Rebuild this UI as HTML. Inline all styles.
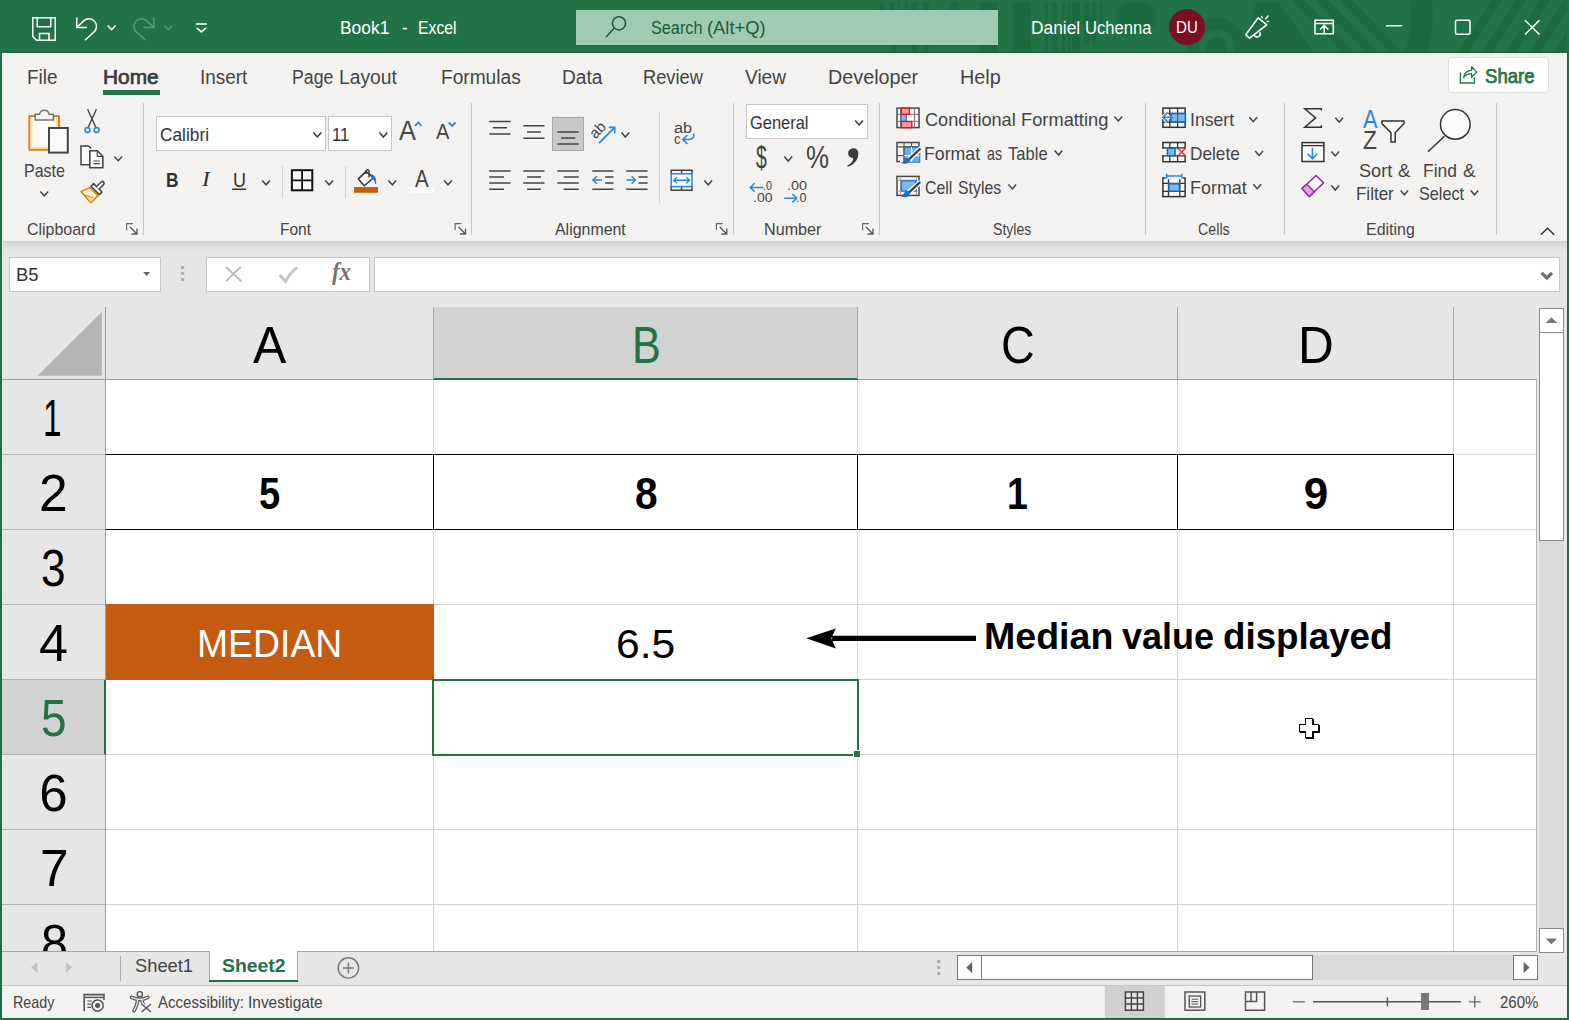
<!DOCTYPE html>
<html lang="en"><head><meta charset="utf-8"><title>Book1 - Excel</title>
<style>
html,body{margin:0;padding:0;}
body{width:1569px;height:1020px;overflow:hidden;position:relative;background:#e6e6e6;font-family:"Liberation Sans", sans-serif;}
#app{position:absolute;left:0;top:0;width:1569px;height:1020px;overflow:hidden;}
#app div{position:absolute;box-sizing:border-box;}
.t{position:absolute;white-space:nowrap;transform-origin:0 0;display:block;}
svg.ov{position:absolute;left:0;top:0;}
</style></head><body><div id="app">
<div style="left:0px;top:0px;width:1569px;height:1020px;background:#217346;"></div>
<div style="left:2px;top:53px;width:1565px;height:965px;background:#e6e6e6;"></div>
<div style="left:1px;top:52px;width:1567px;height:967px;background:#186a3b;"></div>
<div style="left:2px;top:53px;width:1565px;height:965px;background:#fbf9f9;"></div>
<div style="left:3px;top:54px;width:1564px;height:964px;background:#e6e6e6;"></div>
<div style="left:576px;top:10px;width:422px;height:35px;background:#9fcbb2;"></div>
<div style="left:3px;top:54px;width:1564px;height:187px;background:#f3f2f1;"></div>
<div style="left:3px;top:241px;width:1564px;height:10px;background:linear-gradient(#d0d0d0,#dcdcdc 40%,#e6e6e6);"></div>
<div style="left:103px;top:90px;width:57px;height:5px;background:#217346;"></div>
<div style="left:1448px;top:57px;width:101px;height:36px;background:#fff;border:1px solid #e1dfdd;border-radius:4px;"></div>
<div style="left:143px;top:103px;width:1px;height:132px;background:#c8c6c4;"></div>
<div style="left:471px;top:103px;width:1px;height:132px;background:#c8c6c4;"></div>
<div style="left:733px;top:103px;width:1px;height:132px;background:#c8c6c4;"></div>
<div style="left:879px;top:103px;width:1px;height:132px;background:#c8c6c4;"></div>
<div style="left:1145px;top:103px;width:1px;height:132px;background:#c8c6c4;"></div>
<div style="left:1284px;top:103px;width:1px;height:132px;background:#c8c6c4;"></div>
<div style="left:1496px;top:103px;width:1px;height:132px;background:#c8c6c4;"></div>
<div style="left:282px;top:166px;width:1px;height:32px;background:#d2d0ce;"></div>
<div style="left:345px;top:166px;width:1px;height:32px;background:#d2d0ce;"></div>
<div style="left:659px;top:112px;width:1px;height:91px;background:#d2d0ce;"></div>
<div style="left:156px;top:116px;width:170px;height:35px;background:#fff;border:1px solid #c8c6c4;"></div>
<div style="left:328px;top:116px;width:64px;height:35px;background:#fff;border:1px solid #c8c6c4;"></div>
<div style="left:746px;top:104px;width:122px;height:35px;background:#fff;border:1px solid #c8c6c4;"></div>
<div style="left:552px;top:117px;width:32px;height:34px;background:#c8c8c8;border:1px solid #a6a6a6;"></div>
<div style="left:9px;top:257px;width:152px;height:35px;background:#fff;border:1px solid #c6c6c6;"></div>
<div style="left:206px;top:257px;width:164px;height:35px;background:#fff;border:1px solid #c6c6c6;"></div>
<div style="left:374px;top:257px;width:1186px;height:35px;background:#fff;border:1px solid #c6c6c6;"></div>
<div style="left:106px;top:380px;width:1430px;height:571px;background:#fff;"></div>
<div style="left:434px;top:307px;width:423px;height:71px;background:#d2d2d2;"></div>
<div style="left:433px;top:378px;width:425px;height:2px;background:#217346;"></div>
<div style="left:2px;top:680px;width:102px;height:74px;background:#d2d2d2;"></div>
<div style="left:104px;top:679px;width:2px;height:76px;background:#217346;"></div>
<div style="left:2px;top:379px;width:432px;height:1px;background:#9b9b9b;"></div>
<div style="left:858px;top:379px;width:679px;height:1px;background:#9b9b9b;"></div>
<div style="left:105px;top:307px;width:1px;height:373px;background:#9b9b9b;"></div>
<div style="left:105px;top:755px;width:1px;height:197px;background:#9b9b9b;"></div>
<div style="left:433px;top:307px;width:1px;height:72px;background:#a6a6a6;"></div>
<div style="left:857px;top:307px;width:1px;height:72px;background:#a6a6a6;"></div>
<div style="left:1177px;top:307px;width:1px;height:72px;background:#a6a6a6;"></div>
<div style="left:1453px;top:307px;width:1px;height:72px;background:#a6a6a6;"></div>
<div style="left:2px;top:454px;width:103px;height:1px;background:#b0b0b0;"></div>
<div style="left:2px;top:529px;width:103px;height:1px;background:#b0b0b0;"></div>
<div style="left:2px;top:604px;width:103px;height:1px;background:#b0b0b0;"></div>
<div style="left:2px;top:679px;width:103px;height:1px;background:#b0b0b0;"></div>
<div style="left:2px;top:754px;width:103px;height:1px;background:#b0b0b0;"></div>
<div style="left:2px;top:829px;width:103px;height:1px;background:#b0b0b0;"></div>
<div style="left:2px;top:904px;width:103px;height:1px;background:#b0b0b0;"></div>
<div style="left:433px;top:380px;width:1px;height:571px;background:#d4d4d4;"></div>
<div style="left:857px;top:380px;width:1px;height:571px;background:#d4d4d4;"></div>
<div style="left:1177px;top:380px;width:1px;height:571px;background:#d4d4d4;"></div>
<div style="left:1453px;top:380px;width:1px;height:571px;background:#d4d4d4;"></div>
<div style="left:106px;top:454px;width:1430px;height:1px;background:#d4d4d4;"></div>
<div style="left:106px;top:529px;width:1430px;height:1px;background:#d4d4d4;"></div>
<div style="left:106px;top:604px;width:1430px;height:1px;background:#d4d4d4;"></div>
<div style="left:106px;top:679px;width:1430px;height:1px;background:#d4d4d4;"></div>
<div style="left:106px;top:754px;width:1430px;height:1px;background:#d4d4d4;"></div>
<div style="left:106px;top:829px;width:1430px;height:1px;background:#d4d4d4;"></div>
<div style="left:106px;top:904px;width:1430px;height:1px;background:#d4d4d4;"></div>
<div style="left:1536px;top:379px;width:1px;height:573px;background:#b4b4b4;"></div>
<div style="left:106px;top:604px;width:328px;height:76px;background:#c55a11;"></div>
<div style="left:106px;top:454px;width:1348px;height:1px;background:#000;"></div>
<div style="left:106px;top:529px;width:1348px;height:1px;background:#000;"></div>
<div style="left:433px;top:454px;width:1px;height:76px;background:#000;"></div>
<div style="left:857px;top:454px;width:1px;height:76px;background:#000;"></div>
<div style="left:1177px;top:454px;width:1px;height:76px;background:#000;"></div>
<div style="left:1453px;top:454px;width:1px;height:76px;background:#000;"></div>
<div style="left:432px;top:679px;width:427px;height:77px;border:2px solid #217346;"></div>
<div style="left:853px;top:750px;width:7px;height:7px;background:#fff;"></div>
<div style="left:854px;top:751px;width:6px;height:6px;background:#217346;"></div>
<div style="left:1539px;top:541px;width:25px;height:388px;background:#d9d9d9;"></div>
<div style="left:1539px;top:308px;width:25px;height:25px;background:#fff;border:1px solid #8a8a8a;"></div>
<div style="left:1539px;top:332px;width:25px;height:209px;background:#fff;border:1px solid #8a8a8a;"></div>
<div style="left:2px;top:951px;width:1565px;height:35px;background:#e6e6e6;"></div>
<div style="left:2px;top:951px;width:1535px;height:1px;background:#a6a6a6;"></div>
<div style="left:1539px;top:928px;width:25px;height:25px;background:#fff;border:1px solid #8a8a8a;"></div>
<div style="left:2px;top:985px;width:1565px;height:1px;background:#c6c6c6;"></div>
<div style="left:120px;top:956px;width:1px;height:25px;background:#ababab;"></div>
<div style="left:209px;top:951px;width:89px;height:29px;background:#fff;border-left:1px solid #a6a6a6;border-right:1px solid #a6a6a6;"></div>
<div style="left:209px;top:980px;width:89px;height:2px;background:#217346;"></div>
<div style="left:1313px;top:955px;width:201px;height:25px;background:#d9d9d9;"></div>
<div style="left:957px;top:955px;width:25px;height:25px;background:#fff;border:1px solid #777;"></div>
<div style="left:981px;top:955px;width:332px;height:25px;background:#fff;border:1px solid #777;"></div>
<div style="left:1513px;top:955px;width:25px;height:25px;background:#fff;border:1px solid #777;"></div>
<div style="left:2px;top:986px;width:1565px;height:32px;background:#f3f2f1;"></div>
<div style="left:1105px;top:986px;width:60px;height:32px;background:#d2d0ce;"></div>
<svg class="ov" width="1569" height="1020" viewBox="0 0 1569 1020" fill="none">
<svg x="0" y="0" width="1567" height="52" viewBox="0 0 1567 52" overflow="hidden"><g fill="#1e6a40"><rect x="879.5" y="2" width="4.5" height="8"/><rect x="890" y="2" width="4.4" height="8"/><rect x="898" y="2" width="2" height="8"/><rect x="904.7" y="2" width="3.3" height="8"/><rect x="911.6" y="2" width="5.8" height="8"/><rect x="923" y="2" width="6" height="8"/><rect x="949.5" y="2" width="9.2" height="8"/><rect x="979.3" y="2" width="18.4" height="8"/><rect x="891" y="45" width="5.7" height="7"/><rect x="911.6" y="45" width="5.8" height="7"/><rect x="924" y="45" width="5" height="7"/><rect x="979" y="45" width="18.7" height="7"/><rect x="1012.6" y="2" width="18.4" height="50"/><rect x="1044.7" y="2" width="3.3" height="50"/><rect x="1051.6" y="2" width="5.4" height="50"/><rect x="1062" y="2" width="3" height="50"/><rect x="1067.7" y="2" width="2.3" height="50"/><rect x="1072" y="2" width="8" height="50"/><rect x="1083.7" y="2" width="5.8" height="43"/><rect x="1091.8" y="2" width="4.2" height="43"/><rect x="1099.8" y="2" width="3.2" height="23"/><rect x="1115" y="2" width="42" height="29" rx="14"/><path d="M1244 54L1256 2H1278L1316 54Z"/><circle cx="1216.5" cy="47" r="10.5"/></g><circle cx="1216.5" cy="47" r="23.6" stroke="#1e6a40" stroke-width="11.8"/><g stroke="#1e6a40" stroke-width="9"><path d="M1296 -2L1352 56"/><path d="M1320 -2L1376 56"/><path d="M1344 -2L1400 56"/><path d="M1461 56L1498 -2"/><path d="M1485 56L1522 -2"/><path d="M1509 56L1546 -2"/><path d="M1533 56L1570 -2"/><path d="M1557 56L1594 -2"/></g><path d="M1418 -8A88 88 0 0 1 1410 62" stroke="#1e6a40" stroke-width="22"/></svg>
<circle cx="1187" cy="27.1" r="18" fill="#7a0f22"/>
<path d="M32.75 17.75H55.25V40.25H36.5L32.75 36.5Z M37.25 17.75V26.75H50.75V17.75 M39.5 40.25V33.5H49V40.25" stroke="#fff" stroke-width="1.5"/>
<path d="M76.75 17.5V27.5H87 M77.2 27L84 20.6A7.6 7.6 0 0 1 94.8 31.2L85 40.3" stroke="#fff" stroke-width="1.5"/>
<path d="M107.70 25.50L111.60 29.70L115.50 25.50" stroke="#fff" stroke-width="1.5"/>
<g transform="translate(230.5 0) scale(-1 1)"><path d="M76.75 17.5V27.5H87 M77.2 27L84 20.6A7.6 7.6 0 0 1 94.8 31.2L85 40.3" stroke="#5b9a78" stroke-width="1.5"/></g>
<path d="M164.40 25.50L168.30 29.70L172.20 25.50" stroke="#5b9a78" stroke-width="1.5"/>
<path d="M195.9 24H207" stroke="#fff" stroke-width="1.5"/>
<path d="M196.60 27.70L201.40 31.90L206.20 27.70" stroke="#fff" stroke-width="1.5"/>
<circle cx="619" cy="23.3" r="6.6" stroke="#1d5c3a" stroke-width="1.5"/><path d="M614.3 28.1L605.8 37.2" stroke="#1d5c3a" stroke-width="1.5"/>
<path d="M1258.2 17.8L1266.8 24.9L1249.5 38.2L1245.8 34.7Z" stroke="#fff" stroke-width="1.5" stroke-linejoin="round"/><path d="M1254 35.2A3 3 0 0 0 1259.8 32.2" stroke="#fff" stroke-width="1.5"/><path d="M1261.3 15.9L1262.6 18.2M1265.3 19.3L1268.6 15.5M1266.6 22L1269.2 21" stroke="#fff" stroke-width="1.3"/>
<path d="M1315 20.2H1333.3V33.7H1315Z M1315 23.6H1333.3 M1324.2 33.5V25.6 M1320 29.5L1324.2 25.3L1328.4 29.5" stroke="#fff" stroke-width="1.5"/>
<path d="M1386 25.75H1402.3" stroke="#fff" stroke-width="1.5"/>
<rect x="1455.5" y="20.2" width="14.5" height="14" rx="1.5" stroke="#fff" stroke-width="1.5"/>
<path d="M1525 20.2L1539.5 34.5M1539.5 20.2L1525 34.5" stroke="#fff" stroke-width="1.5"/>
<rect x="29.4" y="116.1" width="29.5" height="33.6" fill="#fafafa" stroke="#e07b10" stroke-width="2"/><path d="M31.5 118V147.7H47 M56.8 118V126" stroke="#fbe0a0" stroke-width="1.8"/><path d="M35.2 120V114.2H39.6A4.8 4.8 0 0 1 49 114.2H53.4V120Z" fill="#f3f2f1" stroke="#767676" stroke-width="1.5"/><rect x="49" y="128" width="18.8" height="24.6" fill="#fafafa" stroke="#444" stroke-width="2"/>
<path d="M40.40 191.60L44.30 195.80L48.20 191.60" stroke="#444" stroke-width="1.5"/>
<path d="M87.6 109.3L95.8 127.2M96.4 109.3L88.2 127.2" stroke="#444" stroke-width="1.4"/><circle cx="87.5" cy="130" r="2.4" stroke="#2b88d8" stroke-width="1.6"/><circle cx="96.6" cy="130" r="2.4" stroke="#2b88d8" stroke-width="1.6"/>
<path d="M89 164.8H81V146H88.5L91 148.5" stroke="#444" stroke-width="1.5" fill="#fafafa"/><path d="M89.8 150.8H97.3L102.8 156.3V167.7H89.8Z" fill="#fafafa" stroke="#444" stroke-width="1.6"/><path d="M97.3 150.8V156.3H102.8 M93.4 161H99.8M93.4 163.7H99.8" stroke="#444" stroke-width="1.2"/>
<path d="M114.30 156.50L118.20 160.70L122.10 156.50" stroke="#444" stroke-width="1.5"/>
<path d="M81 191.6L90 187.6L98 195.6L90.8 202.8Z" fill="#fdf1d8" stroke="#e07b10" stroke-width="1.5" stroke-linejoin="round"/><path d="M84 195L95 198.5" stroke="#e07b10" stroke-width="1.3"/><path d="M86 196.5L90.8 202L94.5 198.3Z" fill="#fbd58a"/><path d="M91 186.2L93.6 183.6L102 192L99.4 194.6Z" fill="#fafafa" stroke="#444" stroke-width="1.5" stroke-linejoin="round"/><path d="M96.2 186.8L101.2 182A1.6 1.6 0 0 1 103.6 184.4L98.8 189.4" stroke="#444" stroke-width="1.5" fill="#fafafa"/>
<path d="M126.6 230V223.6H133" stroke="#666" stroke-width="1.2"/><path d="M130 227L136.5 233.5M131.5 234H137V228.5" stroke="#555" stroke-width="1.3"/>
<path d="M313.30 132.60L317.30 137.00L321.30 132.60" stroke="#333" stroke-width="1.5"/>
<path d="M379.50 132.60L383.40 137.00L387.30 132.60" stroke="#333" stroke-width="1.5"/>
<path d="M415 126L418.3 122.4L421.6 126" stroke="#2b88d8" stroke-width="1.8"/>
<path d="M448.6 122.3L452.1 125.9L455.6 122.3" stroke="#2b88d8" stroke-width="1.8"/>
<path d="M232.1 189.25H246.2" stroke="#333" stroke-width="1.5"/>
<path d="M262.20 180.40L266.10 184.80L270.00 180.40" stroke="#444" stroke-width="1.5"/>
<rect x="291.9" y="170.2" width="20.4" height="20.1" fill="#fafafa" stroke="#111" stroke-width="2"/><path d="M302.1 170.2V190.3M291.9 180.3H312.3" stroke="#111" stroke-width="1.8"/>
<path d="M325.20 180.40L329.10 184.80L333.00 180.40" stroke="#444" stroke-width="1.5"/>
<rect x="354.1" y="187.1" width="24" height="5.7" fill="#c55a11"/>
<path d="M358.3 178.9L366 171.6L373.6 177.8L364.3 185.7Z" fill="#fafafa" stroke="#333" stroke-width="1.5" stroke-linejoin="round"/><path d="M366 174V170.8A1.6 1.6 0 0 1 369 170.8V177.5" stroke="#333" stroke-width="1.4"/><path d="M371.2 174.6C375 175.5 376.2 179 375.6 183.8C374.8 180.5 373.6 178.6 371.5 177.6Z" fill="#1b6ec2" stroke="#1b6ec2" stroke-width="0.8"/>
<path d="M388.40 180.40L392.30 184.80L396.20 180.40" stroke="#444" stroke-width="1.5"/>
<rect x="409.8" y="187.1" width="24.2" height="5.7" fill="#fff"/>
<path d="M444.10 180.40L448.00 184.80L451.90 180.40" stroke="#444" stroke-width="1.5"/>
<path d="M455.1 230V223.6H461.5" stroke="#666" stroke-width="1.2"/><path d="M458.5 227L465.0 233.5M460.0 234H465.5V228.5" stroke="#555" stroke-width="1.3"/>
<path d="M489.2 121.5H510.6M492.7 127.8H507.1M489.2 134.0H510.6" stroke="#444" stroke-width="1.5"/>
<path d="M523.3 125.8H544.5M527.0 132.1H541.0M523.3 138.2H544.5" stroke="#444" stroke-width="1.5"/>
<path d="M557.3 132.1H578.8M561.0 138.1H575.3M557.3 144.1H578.8" stroke="#444" stroke-width="1.5"/>
<path d="M489.2 170.9H510.6M489.2 177.0H503.9M489.2 183.1H510.6M489.2 189.2H503.9" stroke="#444" stroke-width="1.5"/>
<path d="M523.3 170.9H544.5M527.0 177.0H541.0M523.3 183.1H544.5M527.0 189.2H541.0" stroke="#444" stroke-width="1.5"/>
<path d="M557.3 170.9H578.8M563.7 177.0H578.8M557.3 183.1H578.8M563.7 189.2H578.8" stroke="#444" stroke-width="1.5"/>
<path d="M592.3 170.9H613.5M605.1 177.0H613.5M605.1 183.1H613.5M592.3 189.2H613.5" stroke="#444" stroke-width="1.5"/>
<path d="M626.3 170.9H647.6M638.5 177.0H647.6M638.5 183.1H647.6M626.3 189.2H647.6" stroke="#444" stroke-width="1.5"/>
<path d="M602 180H593.2M596.8 176.2L593 180L596.8 183.8" stroke="#2b88d8" stroke-width="1.5"/>
<path d="M626.5 180H635.2M631.6 176.2L635.4 180L631.6 183.8" stroke="#2b88d8" stroke-width="1.5"/>
<path d="M599 143.2L614.2 127.8M608.8 127.3H614.7V133.2" stroke="#2b88d8" stroke-width="1.7"/>
<text x="0" y="0" transform="translate(595.6 139.6) rotate(-47)" font-family="Liberation Sans, sans-serif" font-size="15" fill="#444" textLength="16.6" lengthAdjust="spacingAndGlyphs">ab</text>
<path d="M621.40 132.60L625.30 137.00L629.20 132.60" stroke="#444" stroke-width="1.5"/>
<path d="M693.6 133.4C694.6 137 692.6 139.5 689 139.5H683M687.4 135L682.8 139.5L687.4 144" stroke="#2b88d8" stroke-width="1.7"/>
<path d="M671.2 173.8V170.2H692V173.8M671.2 186.6V190.3H692V186.6M681.6 170.2V173.8M681.6 186.6V190.3" stroke="#444" stroke-width="1.5"/>
<rect x="671.2" y="173.8" width="20.8" height="12.8" fill="#fafafa" stroke="#2b88d8" stroke-width="1.5"/><path d="M674 180.2H689.4M677 177.2L673.8 180.2L677 183.2M686.4 177.2L689.6 180.2L686.4 183.2" stroke="#2b88d8" stroke-width="1.4"/>
<path d="M704.30 180.40L708.20 184.80L712.10 180.40" stroke="#444" stroke-width="1.5"/>
<path d="M716.4 230V223.6H722.8" stroke="#666" stroke-width="1.2"/><path d="M719.8 227L726.3 233.5M721.3 234H726.8V228.5" stroke="#555" stroke-width="1.3"/>
<path d="M855.20 120.50L859.10 124.90L863.00 120.50" stroke="#333" stroke-width="1.5"/>
<path d="M784.20 156.60L788.20 161.10L792.20 156.60" stroke="#444" stroke-width="1.5"/>
<path d="M853 148.2A4.9 4.9 0 0 1 858.3 153.4C858.3 160 853.5 165 847.6 166.8L847.3 165.6C850.8 163.8 853 161.2 853.2 158.2A4.9 4.9 0 0 1 853 148.2Z" fill="#3b3a39"/>
<path d="M763.2 187.4H750.4M754.6 183.2L750.2 187.4L754.6 191.6" stroke="#2b88d8" stroke-width="1.5"/>
<path d="M784.2 198.2H796.6M792.4 194L796.8 198.2L792.4 202.4" stroke="#2b88d8" stroke-width="1.5"/>
<path d="M862.6 230V223.6H869" stroke="#666" stroke-width="1.2"/><path d="M866 227L872.5 233.5M867.5 234H873V228.5" stroke="#555" stroke-width="1.3"/>
<rect x="897" y="108.1" width="22" height="19.5" fill="#fafafa" stroke="#444" stroke-width="1.5"/><path d="M900.6 108V127.6M914.6 108V127.6M897 114.4H919M897 121.4H919" stroke="#777" stroke-width="1"/><rect x="901.1" y="114.6" width="5.2" height="6.6" fill="#7ab9ec" stroke="#1b6ec2" stroke-width="1"/><rect x="901.4" y="108.1" width="8" height="6.2" fill="#ff9aa2" stroke="#e81123" stroke-width="1.4"/><rect x="901.4" y="121.5" width="10.4" height="6.2" fill="#ff9aa2" stroke="#e81123" stroke-width="1.4"/>
<path d="M1114.40 116.40L1118.30 120.90L1122.20 116.40" stroke="#444" stroke-width="1.5"/>
<path d="M919 146V142.5H897V161.5H900" stroke="#444" stroke-width="1.5"/><rect x="904" y="147" width="15.8" height="15.2" fill="#6cb2ea" stroke="#1b78d0" stroke-width="1"/><path d="M904 142.5V161M911.6 142.5V147M897 146.9H919M897 155.6H904" stroke="#555" stroke-width="1.1"/><path d="M911.6 147V162M904 155.6H919.6" stroke="#fafafa" stroke-width="1"/>
<g transform="translate(896.2 142.2)"><path d="M23.6 7.2L12.2 17.6" stroke="#fafafa" stroke-width="5" stroke-linecap="round"/><path d="M23.6 7L12.2 17.6" stroke="#444" stroke-width="2.4" stroke-linecap="round"/><path d="M12.6 15.8C14.6 17 14.4 19.6 12 20.8C9.6 22 6.6 21.6 4.6 20.6C7 20 7.6 18.8 8.4 17.2C9.2 15.6 11 15 12.6 15.8Z" fill="#1b6ec2"/></g>
<path d="M1054.70 150.60L1058.50 155.10L1062.30 150.60" stroke="#444" stroke-width="1.5"/>
<rect x="897" y="176.4" width="22" height="19" fill="#fafafa" stroke="#444" stroke-width="1.5"/><path d="M900.6 176.4V195.4M916.4 176.4V195.4M897 180.2H919M897 191.2H919" stroke="#999" stroke-width="0.9"/><rect x="901.3" y="180.8" width="14.6" height="10.2" fill="#7ab9ec" stroke="#1b6ec2" stroke-width="1.2"/>
<g transform="translate(896 175.6)"><path d="M23.6 7.2L12.2 17.6" stroke="#fafafa" stroke-width="5" stroke-linecap="round"/><path d="M23.6 7L12.2 17.6" stroke="#444" stroke-width="2.4" stroke-linecap="round"/><path d="M12.6 15.8C14.6 17 14.4 19.6 12 20.8C9.6 22 6.6 21.6 4.6 20.6C7 20 7.6 18.8 8.4 17.2C9.2 15.6 11 15 12.6 15.8Z" fill="#1b6ec2"/></g>
<path d="M1008.50 184.40L1012.30 188.90L1016.10 184.40" stroke="#444" stroke-width="1.5"/>
<rect x="1162.9" y="108.1" width="22.2" height="19.2" fill="#fafafa" stroke="#333" stroke-width="1.5"/>
<path d="M1169.8 108.1V127.3M1177.6 108.1V127.3M1162.9 113.4H1185.1000000000001M1162.9 122.1H1185.1000000000001" stroke="#333" stroke-width="1.3"/>
<rect x="1171" y="113.6" width="14.4" height="8.3" fill="#7ab9ec" stroke="#0f6cbd" stroke-width="1.5"/><path d="M1177.6 113.6V121.9" stroke="#0f6cbd" stroke-width="1.2"/><path d="M1170 117.2H1162.8M1167.6 112.6L1162.8 117.2L1167.6 121.8" stroke="#f3f2f1" stroke-width="3.6"/><path d="M1173.4 117.2H1162.8M1167.6 112.6L1162.8 117.2L1167.6 121.8" stroke="#2b88d8" stroke-width="1.6"/>
<path d="M1249.40 117.30L1253.30 121.70L1257.20 117.30" stroke="#444" stroke-width="1.5"/>
<rect x="1162.9" y="142.5" width="22.2" height="19.2" fill="#fafafa" stroke="#333" stroke-width="1.5"/>
<path d="M1169.8 142.5V161.7M1177.6 142.5V161.7M1162.9 148H1185.1000000000001M1162.9 155.8H1185.1000000000001" stroke="#333" stroke-width="1.3"/>
<rect x="1161.5" y="148.8" width="25.5" height="6.2" fill="#f3f2f1"/><rect x="1167.4" y="148.3" width="7.6" height="7.4" fill="#7ab9ec" stroke="#0f6cbd" stroke-width="1.5"/><path d="M1178 148.4L1185.4 155.8M1185.4 148.4L1178 155.8" stroke="#ee3a3a" stroke-width="1.5"/>
<path d="M1255.20 151.00L1259.10 155.40L1263.00 151.00" stroke="#444" stroke-width="1.5"/>
<rect x="1162.9" y="178" width="22.2" height="18.6" fill="#fafafa" stroke="#333" stroke-width="1.5"/>
<path d="M1168.5 178V196.6M1179.8 178V196.6M1162.9 183.4H1185.1000000000001M1162.9 191.4H1185.1000000000001" stroke="#333" stroke-width="1.3"/>
<rect x="1165.5" y="173" width="17.4" height="6.2" fill="#f3f2f1"/><path d="M1166.6 176.1H1181.8M1166.6 173.8V178.6M1181.8 173.8V178.6" stroke="#2b88d8" stroke-width="1.5"/><rect x="1168.9" y="183.8" width="10.6" height="7.4" fill="#7ab9ec" stroke="#0f6cbd" stroke-width="1.5"/>
<path d="M1253.20 184.30L1257.20 188.70L1261.20 184.30" stroke="#444" stroke-width="1.5"/>
<path d="M1321.3 110.6V108.7H1304.8L1315.6 117.9L1304.8 127.2H1321.3V125.3" stroke="#333" stroke-width="1.5"/>
<path d="M1335.30 117.70L1339.20 122.10L1343.10 117.70" stroke="#444" stroke-width="1.5"/>
<rect x="1302" y="142.6" width="21.9" height="18.9" fill="#fafafa" stroke="#333" stroke-width="1.5"/><path d="M1302 145.6H1324" stroke="#333" stroke-width="1.3"/><path d="M1312.4 147.8V158.4M1307.6 153.8L1312.4 158.6L1317.2 153.8" stroke="#2b88d8" stroke-width="1.6"/>
<path d="M1331.40 151.50L1335.30 155.90L1339.20 151.50" stroke="#444" stroke-width="1.5"/>
<path d="M1302 188.6L1316.1 175.5L1323.6 182.9L1309.2 196.6Z" fill="#fafafa" stroke="#9b2fa5" stroke-width="1.5" stroke-linejoin="round"/><path d="M1302 188.6L1306.8 184.2L1314.2 191.8L1309.2 196.6Z" fill="#dca3e2" stroke="#9b2fa5" stroke-width="1.5" stroke-linejoin="round"/>
<path d="M1331.40 185.60L1335.30 190.00L1339.20 185.60" stroke="#444" stroke-width="1.5"/>
<path d="M1381.9 120.9H1404V123.6L1395.2 132.8V142H1391V132.8L1381.9 123.6Z" fill="#fafafa" stroke="#333" stroke-width="1.5" stroke-linejoin="round"/>
<path d="M1400.60 190.40L1404.30 194.80L1408.00 190.40" stroke="#444" stroke-width="1.5"/>
<circle cx="1455.3" cy="124.4" r="14.8" fill="#fafafa" stroke="#333" stroke-width="1.5"/><path d="M1444.4 136.2L1428 151.8" stroke="#333" stroke-width="1.5"/>
<path d="M1470.80 190.40L1474.50 194.80L1478.20 190.40" stroke="#444" stroke-width="1.5"/>
<path d="M1540.8 234.8L1547.5 228.2L1554.2 234.8" stroke="#333" stroke-width="1.5"/>
<path d="M1460.4 72.4V83H1474.4V77.4" stroke="#217346" stroke-width="1.4"/><path d="M1463.6 77.6C1464.4 72.8 1467.6 70.6 1471.6 70.4V66.8L1476.8 72.1L1471.6 77.2V73.6C1468.2 73.6 1465.6 74.6 1463.6 77.6Z" stroke="#217346" stroke-width="1.3" stroke-linejoin="round"/>
<path d="M143.2 272H150.2L146.7 276Z" fill="#666"/>
<path d="M181 266H184.2V269H181ZM181 272H184.2V275H181ZM181 278H184.2V281H181Z" fill="#b0b0b0"/>
<path d="M226 267L241.4 281.4M241 267C236 271 230 277 226 281.4" stroke="#bdbdbd" stroke-width="2"/>
<path d="M279.6 275L285.6 281.6C288 276 292 271 297.2 267.4" stroke="#c6c6c6" stroke-width="3"/>
<path d="M1541.6 272.8L1546.8 278L1552 272.8" stroke="#707070" stroke-width="3.2"/>
<path d="M37.5 375.8H101.8V312Z" fill="#b4b4b4"/>
<path d="M832 638.35H976" stroke="#000" stroke-width="5.1"/><path d="M806.2 638.35L835.8 628.4L831.3 638.35L835.8 648.4Z" fill="#000"/>
<path d="M1306 719H1314V725H1320V733H1314V739H1306V733H1300V725H1306Z" fill="#000"/><path d="M1305 718H1313V724H1319V732H1313V738H1305V732H1299V724H1305Z" fill="#000"/><path d="M1306 719H1312V725H1318V731H1312V737H1306V731H1300V725H1306Z" fill="#fff"/>
<path d="M1545.6 323H1557.2L1551.4 317.2Z" fill="#777"/>
<path d="M1545.6 938.4H1557.2L1551.4 944.2Z" fill="#777"/>
<path d="M972.2 962V973.2L966.2 967.6Z" fill="#666"/>
<path d="M1523.6 962V973.2L1529.6 967.6Z" fill="#666"/>
<path d="M37.4 962V973L31 967.5Z" fill="#c2c2c2"/><path d="M65.8 962V973L72.2 967.5Z" fill="#c2c2c2"/>
<circle cx="348.4" cy="967.9" r="10.2" stroke="#777" stroke-width="1.4"/><path d="M343 968H353.8M348.4 962.6V973.4" stroke="#777" stroke-width="1.5"/>
<path d="M937 960H940.4V963H937ZM937 966H940.4V969H937ZM937 972H940.4V975H937Z" fill="#b0b0b0"/>
<path d="M84.2 1011V994.6H104V1000" stroke="#555" stroke-width="1.6"/><path d="M84.2 997.4H104" stroke="#555" stroke-width="1.4"/><path d="M87.4 1001H92M87.4 1004.2H91M87.4 1007.4H91" stroke="#555" stroke-width="1.2"/><circle cx="97.6" cy="1005.6" r="5.6" fill="#f3f2f1" stroke="#555" stroke-width="1.5"/><circle cx="97.6" cy="1005.6" r="2.5" fill="#555"/>
<circle cx="139.8" cy="994.2" r="2.6" stroke="#555" stroke-width="1.4"/><path d="M131.6 997.4C135 999 137.4 999.4 139.8 999.4C142.2 999.4 144.6 999 147.8 997.4M137.6 999.6C137.6 1004 135.8 1007.6 134 1010.8M142 999.6C142 1002 142.4 1003.4 143.6 1005" stroke="#555" stroke-width="3.6" stroke-linecap="round" stroke-linejoin="round"/><path d="M131.6 997.4C135 999 137.4 999.4 139.8 999.4C142.2 999.4 144.6 999 147.8 997.4M137.6 999.6C137.6 1004 135.8 1007.6 134 1010.8M142 999.6C142 1002 142.4 1003.4 143.6 1005" stroke="#f3f2f1" stroke-width="1.2" stroke-linecap="round" stroke-linejoin="round"/><path d="M141.6 1004L151 1012M151 1004L141.6 1012" stroke="#f3f2f1" stroke-width="3.4"/><path d="M141.6 1004L151 1012M151 1004L141.6 1012" stroke="#555" stroke-width="1.4"/>
<rect x="1125.4" y="992" width="18" height="18.2" stroke="#444" stroke-width="1.5" fill="#e8e6e4"/><path d="M1131.4 992V1010M1137.4 992V1010M1125.4 998H1143.4M1125.4 1004H1143.4" stroke="#444" stroke-width="1.4"/>
<rect x="1185" y="992" width="19.8" height="18.2" stroke="#555" stroke-width="1.5"/><rect x="1189.2" y="996" width="11.4" height="11" stroke="#555" stroke-width="1.3"/><path d="M1191.6 999.2H1198.2M1191.6 1001.6H1198.2M1191.6 1004H1198.2" stroke="#555" stroke-width="1"/>
<path d="M1245.5 992H1264.6V1010.2H1245.5ZM1245.5 1001.4H1256.6V992M1251 992V1001.4" stroke="#555" stroke-width="1.5"/>
<path d="M1293 1001.8H1304.8" stroke="#666" stroke-width="1.3"/><path d="M1313 1001.8H1461" stroke="#555" stroke-width="1.6"/><path d="M1387.4 997.4V1006.2" stroke="#555" stroke-width="1.4"/><rect x="1421" y="993" width="8" height="17" fill="#777"/><path d="M1469 1001.8H1480.6M1474.8 996V1007.6" stroke="#666" stroke-width="1.3"/>
</svg>
<span class="t" style="left:339.55px;top:19.01px;font-size:18.3px;line-height:18.3px;color:#fff;transform:scaleX(0.9523);">Book1</span>
<span class="t" style="left:401.50px;top:19.01px;font-size:18.3px;line-height:18.3px;color:#fff;transform:scaleX(0.9167);">-</span>
<span class="t" style="left:418.14px;top:19.01px;font-size:18.3px;line-height:18.3px;color:#fff;transform:scaleX(0.8618);">Excel</span>
<span class="t" style="left:650.70px;top:19.01px;font-size:18.3px;line-height:18.3px;color:#1d5c3a;transform:scaleX(0.8880);">Search</span>
<span class="t" style="left:706.59px;top:19.01px;font-size:18.3px;line-height:18.3px;color:#1d5c3a;transform:scaleX(1.0050);">(Alt+Q)</span>
<span class="t" style="left:1031.15px;top:19.01px;font-size:18.3px;line-height:18.3px;color:#fff;transform:scaleX(0.9485);">Daniel</span>
<span class="t" style="left:1085.09px;top:19.01px;font-size:18.3px;line-height:18.3px;color:#fff;transform:scaleX(0.9067);">Uchenna</span>
<span class="t" style="left:1176.16px;top:20.06px;font-size:16px;line-height:16px;color:#fff;transform:scaleX(0.9418);">DU</span>
<span class="t" style="left:26.55px;top:66.82px;font-size:20px;line-height:20px;color:#444;transform:scaleX(0.9484);">File</span>
<span class="t" style="left:102.96px;top:66.82px;font-size:20px;line-height:20px;color:#3a3a3a;transform:scaleX(1.0435);-webkit-text-stroke:0.7px #3a3a3a;">Home</span>
<span class="t" style="left:199.80px;top:66.82px;font-size:20px;line-height:20px;color:#444;transform:scaleX(0.9452);">Insert</span>
<span class="t" style="left:292.12px;top:66.82px;font-size:20px;line-height:20px;color:#444;transform:scaleX(0.8840);">Page</span>
<span class="t" style="left:339.04px;top:66.82px;font-size:20px;line-height:20px;color:#444;transform:scaleX(0.9632);">Layout</span>
<span class="t" style="left:441.04px;top:66.82px;font-size:20px;line-height:20px;color:#444;transform:scaleX(0.9563);">Formulas</span>
<span class="t" style="left:562.04px;top:66.82px;font-size:20px;line-height:20px;color:#444;transform:scaleX(0.9567);">Data</span>
<span class="t" style="left:643.09px;top:66.82px;font-size:20px;line-height:20px;color:#444;transform:scaleX(0.9135);">Review</span>
<span class="t" style="left:745.25px;top:66.82px;font-size:20px;line-height:20px;color:#444;transform:scaleX(0.9542);">View</span>
<span class="t" style="left:828.01px;top:66.82px;font-size:20px;line-height:20px;color:#444;transform:scaleX(0.9889);">Developer</span>
<span class="t" style="left:960.01px;top:66.82px;font-size:20px;line-height:20px;color:#444;transform:scaleX(0.9898);">Help</span>
<span class="t" style="left:1484.75px;top:65.55px;font-size:20.5px;line-height:20.5px;color:#217346;transform:scaleX(0.9070);-webkit-text-stroke:0.75px #217346;">Share</span>
<span class="t" style="left:24.12px;top:161.89px;font-size:18.2px;line-height:18.2px;color:#444;transform:scaleX(0.8812);">Paste</span>
<span class="t" style="left:26.50px;top:221.40px;font-size:16.3px;line-height:16.3px;color:#444;transform:scaleX(0.9798);">Clipboard</span>
<span class="t" style="left:279.55px;top:221.40px;font-size:16.3px;line-height:16.3px;color:#444;transform:scaleX(0.9515);">Font</span>
<span class="t" style="left:554.50px;top:221.40px;font-size:16.3px;line-height:16.3px;color:#444;transform:scaleX(0.9777);">Alignment</span>
<span class="t" style="left:764.01px;top:221.40px;font-size:16.3px;line-height:16.3px;color:#444;transform:scaleX(0.9916);">Number</span>
<span class="t" style="left:992.75px;top:221.40px;font-size:16.3px;line-height:16.3px;color:#444;transform:scaleX(0.8655);">Styles</span>
<span class="t" style="left:1198.20px;top:221.40px;font-size:16.3px;line-height:16.3px;color:#444;transform:scaleX(0.8752);">Cells</span>
<span class="t" style="left:1365.77px;top:221.40px;font-size:16.3px;line-height:16.3px;color:#444;transform:scaleX(0.9795);">Editing</span>
<span class="t" style="left:159.50px;top:126.14px;font-size:18.2px;line-height:18.2px;color:#333;transform:scaleX(0.9504);">Calibri</span>
<span class="t" style="left:331.59px;top:126.14px;font-size:18.2px;line-height:18.2px;color:#333;transform:scaleX(0.9148);">11</span>
<span class="t" style="left:749.50px;top:114.14px;font-size:18.2px;line-height:18.2px;color:#333;transform:scaleX(0.9032);">General</span>
<span class="t" style="left:166.16px;top:169.56px;font-size:20.6px;line-height:20.6px;color:#333;transform:scaleX(0.8385);font-weight:700;">B</span>
<span class="t" style="left:202.40px;top:169.00px;font-size:21.5px;line-height:21.5px;color:#333;transform:scaleX(1.1000);font-style:italic;font-family:'Liberation Serif', serif;">I</span>
<span class="t" style="left:232.83px;top:170.69px;font-size:19.5px;line-height:19.5px;color:#333;transform:scaleX(0.9208);">U</span>
<span class="t" style="left:924.70px;top:110.89px;font-size:18.2px;line-height:18.2px;color:#444;transform:scaleX(0.9971);">Conditional</span>
<span class="t" style="left:1020.50px;top:110.89px;font-size:18.2px;line-height:18.2px;color:#444;transform:scaleX(1.0046);">Formatting</span>
<span class="t" style="left:924.13px;top:144.89px;font-size:18.2px;line-height:18.2px;color:#444;transform:scaleX(0.9744);">Format</span>
<span class="t" style="left:986.70px;top:144.89px;font-size:18.2px;line-height:18.2px;color:#444;transform:scaleX(0.7795);">as</span>
<span class="t" style="left:1008.30px;top:144.89px;font-size:18.2px;line-height:18.2px;color:#444;transform:scaleX(0.9109);">Table</span>
<span class="t" style="left:924.70px;top:178.89px;font-size:18.2px;line-height:18.2px;color:#444;transform:scaleX(0.8683);">Cell</span>
<span class="t" style="left:957.90px;top:178.89px;font-size:18.2px;line-height:18.2px;color:#444;transform:scaleX(0.8719);">Styles</span>
<span class="t" style="left:1190.03px;top:110.89px;font-size:18.2px;line-height:18.2px;color:#444;transform:scaleX(0.9677);">Insert</span>
<span class="t" style="left:1190.05px;top:144.89px;font-size:18.2px;line-height:18.2px;color:#444;transform:scaleX(0.9474);">Delete</span>
<span class="t" style="left:1190.01px;top:178.89px;font-size:18.2px;line-height:18.2px;color:#444;transform:scaleX(0.9859);">Format</span>
<span class="t" style="left:1358.80px;top:161.64px;font-size:18.2px;line-height:18.2px;color:#444;transform:scaleX(0.9969);">Sort</span>
<span class="t" style="left:1397.50px;top:161.64px;font-size:18.2px;line-height:18.2px;color:#444;transform:scaleX(1.0250);">&amp;</span>
<span class="t" style="left:1355.82px;top:185.39px;font-size:18.2px;line-height:18.2px;color:#444;transform:scaleX(0.9337);">Filter</span>
<span class="t" style="left:1422.84px;top:161.64px;font-size:18.2px;line-height:18.2px;color:#444;transform:scaleX(0.9590);">Find</span>
<span class="t" style="left:1463.10px;top:161.64px;font-size:18.2px;line-height:18.2px;color:#444;transform:scaleX(1.0333);">&amp;</span>
<span class="t" style="left:1418.50px;top:185.39px;font-size:18.2px;line-height:18.2px;color:#444;transform:scaleX(0.8912);">Select</span>
<span class="t" style="left:16.00px;top:265.59px;font-size:18.5px;line-height:18.5px;color:#333;transform:scaleX(0.9958);">B5</span>
<span class="t" style="left:253.30px;top:318.98px;font-size:52px;line-height:52px;color:#000;transform:scaleX(0.9600);">A</span>
<span class="t" style="left:632.43px;top:318.98px;font-size:52px;line-height:52px;color:#217346;transform:scaleX(0.8304);">B</span>
<span class="t" style="left:1000.91px;top:319.48px;font-size:52px;line-height:52px;color:#000;transform:scaleX(0.8971);">C</span>
<span class="t" style="left:1297.94px;top:318.98px;font-size:52px;line-height:52px;color:#000;transform:scaleX(0.9531);">D</span>
<span class="t" style="left:43.04px;top:393.33px;font-size:51px;line-height:51px;color:#000;transform:scaleX(0.6522);">1</span>
<span class="t" style="left:39.23px;top:468.33px;font-size:51px;line-height:51px;color:#000;transform:scaleX(1.0104);">2</span>
<span class="t" style="left:41.13px;top:543.33px;font-size:51px;line-height:51px;color:#000;transform:scaleX(0.8654);">3</span>
<span class="t" style="left:38.98px;top:618.33px;font-size:51px;line-height:51px;color:#000;transform:scaleX(1.0192);">4</span>
<span class="t" style="left:41.20px;top:693.33px;font-size:51px;line-height:51px;color:#217346;transform:scaleX(0.9000);">5</span>
<span class="t" style="left:39.25px;top:768.33px;font-size:51px;line-height:51px;color:#000;transform:scaleX(1.0000);">6</span>
<span class="t" style="left:39.98px;top:843.33px;font-size:51px;line-height:51px;color:#000;transform:scaleX(1.0104);">7</span>
<div style="left:2px;top:905px;width:103px;height:46px;overflow:hidden;"><span class="t" style="left:38.60px;top:13.33px;font-size:51px;line-height:51px;color:#000;transform:scaleX(0.9500);">8</span></div>
<span class="t" style="left:259.03px;top:472.25px;font-size:44px;line-height:44px;color:#000;transform:scaleX(0.8652);font-weight:700;">5</span>
<span class="t" style="left:634.83px;top:472.25px;font-size:44px;line-height:44px;color:#000;transform:scaleX(0.9239);font-weight:700;">8</span>
<span class="t" style="left:1007.30px;top:472.25px;font-size:44px;line-height:44px;color:#000;transform:scaleX(0.8523);font-weight:700;">1</span>
<span class="t" style="left:1303.75px;top:472.25px;font-size:44px;line-height:44px;color:#000;transform:scaleX(1.0000);font-weight:700;">9</span>
<span class="t" style="left:196.83px;top:623.99px;font-size:39px;line-height:39px;color:#fff;transform:scaleX(0.9580);">MEDIAN</span>
<span class="t" style="left:615.65px;top:623.97px;font-size:40.5px;line-height:40.5px;color:#000;transform:scaleX(1.0516);">6.5</span>
<span class="t" style="left:983.80px;top:617.66px;font-size:37.5px;line-height:37.5px;color:#000;transform:scaleX(1.0010);font-weight:700;">Median</span>
<span class="t" style="left:1122.10px;top:617.66px;font-size:37.5px;line-height:37.5px;color:#000;transform:scaleX(0.9607);font-weight:700;">value</span>
<span class="t" style="left:1222.62px;top:617.66px;font-size:37.5px;line-height:37.5px;color:#000;transform:scaleX(0.9796);font-weight:700;">displayed</span>
<span class="t" style="left:135.00px;top:956.42px;font-size:19px;line-height:19px;color:#444;transform:scaleX(0.9639);">Sheet1</span>
<span class="t" style="left:222.00px;top:956.42px;font-size:19px;line-height:19px;color:#217346;transform:scaleX(1.0204);font-weight:700;">Sheet2</span>
<span class="t" style="left:13.38px;top:994.28px;font-size:16.5px;line-height:16.5px;color:#444;transform:scaleX(0.8694);">Ready</span>
<span class="t" style="left:157.70px;top:994.28px;font-size:16.5px;line-height:16.5px;color:#444;transform:scaleX(0.9099);">Accessibility:</span>
<span class="t" style="left:247.86px;top:994.28px;font-size:16.5px;line-height:16.5px;color:#444;transform:scaleX(0.9361);">Investigate</span>
<span class="t" style="left:1499.75px;top:994.28px;font-size:16.5px;line-height:16.5px;color:#444;transform:scaleX(0.9111);">260%</span>
<span class="t" style="left:399.30px;top:115.67px;font-size:28.5px;line-height:28.5px;color:#444;transform:scaleX(0.8895);">A</span>
<span class="t" style="left:435.80px;top:120.84px;font-size:22.4px;line-height:22.4px;color:#444;transform:scaleX(0.8933);">A</span>
<span class="t" style="left:415.00px;top:167.53px;font-size:23px;line-height:23px;color:#444;transform:scaleX(0.8875);">A</span>
<span class="t" style="left:673.70px;top:120.05px;font-size:15.3px;line-height:15.3px;color:#444;transform:scaleX(1.0662);">ab</span>
<span class="t" style="left:673.70px;top:130.65px;font-size:15.3px;line-height:15.3px;color:#444;transform:scaleX(0.8625);">c</span>
<span class="t" style="left:755.60px;top:141.68px;font-size:30.5px;line-height:30.5px;color:#444;transform:scaleX(0.6353);">$</span>
<span class="t" style="left:806.05px;top:141.78px;font-size:30.5px;line-height:30.5px;color:#444;transform:scaleX(0.8500);">%</span>
<span class="t" style="left:766.40px;top:179.73px;font-size:12.6px;line-height:12.6px;color:#444;transform:scaleX(0.8571);">0</span>
<span class="t" style="left:762.60px;top:179.73px;font-size:12.6px;line-height:12.6px;color:#444;transform:scaleX(0.8000);">.</span>
<span class="t" style="left:752.89px;top:192.33px;font-size:12.6px;line-height:12.6px;color:#444;transform:scaleX(1.1149);">.00</span>
<span class="t" style="left:786.85px;top:179.73px;font-size:12.6px;line-height:12.6px;color:#444;transform:scaleX(1.1452);">.00</span>
<span class="t" style="left:796.40px;top:192.33px;font-size:12.6px;line-height:12.6px;color:#444;transform:scaleX(1.0001);">.0</span>
<span class="t" style="left:1362.90px;top:106.29px;font-size:26px;line-height:26px;color:#2b88d8;transform:scaleX(0.8389);">A</span>
<span class="t" style="left:1363.30px;top:127.51px;font-size:25.5px;line-height:25.5px;color:#444;transform:scaleX(0.8933);">Z</span>
<span class="t" style="left:332.00px;top:259.96px;font-size:24.5px;line-height:24.5px;color:#737373;transform:scaleX(0.9276);font-weight:700;font-style:italic;font-family:'Liberation Serif', serif;">fx</span>
</div></body></html>
